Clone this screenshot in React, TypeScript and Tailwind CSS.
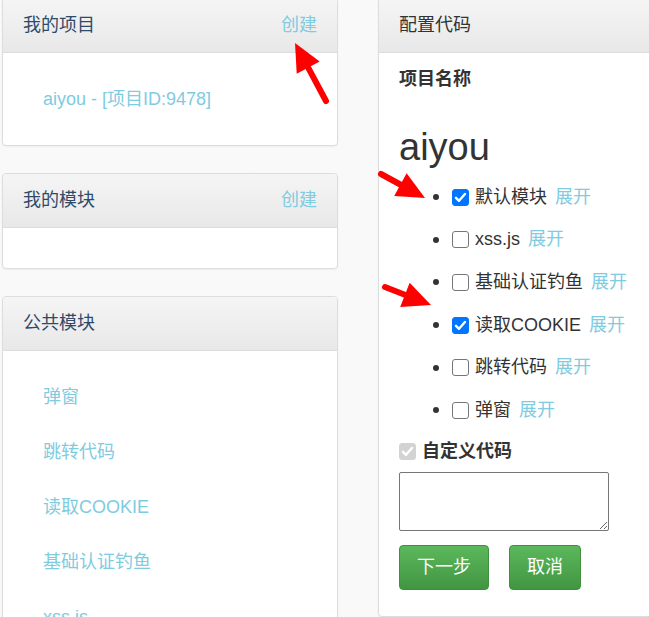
const font = "font-['Liberation_Sans','Noto_Sans_CJK_SC',sans-serif]";

const publicModules = ["弹窗", "跳转代码", "读取COOKIE", "基础认证钓鱼", "xss.js"];

const configModules = [
  { name: "默认模块", checked: true },
  { name: "xss.js", checked: false },
  { name: "基础认证钓鱼", checked: false },
  { name: "读取COOKIE", checked: true },
  { name: "跳转代码", checked: false },
  { name: "弹窗", checked: false },
];

function PanelHeading({ title, action, tone = "text-[#2f4a68]" }: { title: string; action?: string; tone?: string }) {
  return (
    <div className="flex h-[54px] items-center justify-between rounded-t-[4px] border-b border-[#dddddd] bg-gradient-to-b from-[#f5f5f5] to-[#e8e8e8] px-[20px]">
      <span className={`text-[18px] ${tone}`}>{title}</span>
      {action && <a className="text-[18px] text-[#7fcbe0]">{action}</a>}
    </div>
  );
}

function Check({ checked, disabled }: { checked: boolean; disabled?: boolean }) {
  return (
    <span className="relative inline-flex h-[17px] w-[17px] shrink-0">
      <input
        type="checkbox"
        defaultChecked={checked}
        disabled={disabled}
        className={`peer h-[17px] w-[17px] appearance-none rounded-[3px] border bg-white ${
          disabled
            ? "border-[#d3d3d3] checked:bg-[#d3d3d3]"
            : "border-[#767676] checked:border-[#0075ff] checked:bg-[#0075ff]"
        }`}
      />
      <svg
        viewBox="0 0 17 17"
        className="pointer-events-none absolute inset-0 hidden h-[17px] w-[17px] peer-checked:block"
        fill="none"
        stroke="white"
        strokeWidth={2.4}
        strokeLinecap="round"
        strokeLinejoin="round"
      >
        <path d="M4 8.8l3 3L13 5" />
      </svg>
    </span>
  );
}

function Arrow({ x1, y1, x2, y2 }: { x1: number; y1: number; x2: number; y2: number }) {
  // shaft from tail (x1,y1) to tip (x2,y2) with a filled head
  const dx = x2 - x1;
  const dy = y2 - y1;
  const len = Math.hypot(dx, dy);
  const ux = dx / len;
  const uy = dy / len;
  const hl = 28;
  const hw = 13;
  const bx = x2 - ux * hl;
  const by = y2 - uy * hl;
  const pts = `${x2},${y2} ${bx - uy * hw},${by + ux * hw} ${bx + uy * hw},${by - ux * hw}`;
  return (
    <g>
      <line x1={x1} y1={y1} x2={bx + ux * 4} y2={by + uy * 4} stroke="#ff0000" strokeWidth={6} strokeLinecap="round" />
      <polygon points={pts} fill="#ff0000" />
    </g>
  );
}

export default function App() {
  return (
    <div className={`relative h-[617px] w-[649px] overflow-hidden bg-[#f9f9f9] ${font} text-[#333]`}>
      <div className="-mt-[2px] flex items-start">
        {/* left column */}
        <div className="ml-[2px] flex w-[336px] shrink-0 flex-col gap-[27px]">
          <div className="rounded-[4px] border border-[#dddddd] bg-white shadow-[0_1px_2px_rgba(0,0,0,0.05)]">
            <PanelHeading title="我的项目" action="创建" />
            <div className="px-[40px] py-[20px]">
              <a className="flex h-[52px] items-center text-[18px] text-[#7fcbe0]">aiyou - [项目ID:9478]</a>
            </div>
          </div>

          <div className="rounded-[4px] border border-[#dddddd] bg-white shadow-[0_1px_2px_rgba(0,0,0,0.05)]">
            <PanelHeading title="我的模块" action="创建" />
            <div className="h-[40px]" />
          </div>

          <div className="rounded-[4px] border border-[#dddddd] bg-white shadow-[0_1px_2px_rgba(0,0,0,0.05)]">
            <PanelHeading title="公共模块" />
            <ul className="px-[40px] pt-[19px] pb-[20px]">
              {publicModules.map((m) => (
                <li key={m} className="flex h-[55px] items-center">
                  <a className="text-[18px] text-[#7fcbe0]">{m}</a>
                </li>
              ))}
            </ul>
          </div>
        </div>

        {/* right column */}
        <div className="ml-[40px] w-[300px] shrink-0 rounded-[4px] border border-[#dddddd] bg-white shadow-[0_1px_2px_rgba(0,0,0,0.05)]">
          <PanelHeading title="配置代码" tone="text-[#333]" />
          <div className="px-[20px] pt-[14px] pb-[26px]">
            <div className="h-[24px] text-[18px] font-bold leading-[24px]">项目名称</div>
            <h1 className="mt-[35px] h-[42px] text-[38px] leading-[42px]">aiyou</h1>
            <ul className="mt-[8px]">
              {configModules.map((m) => (
                <li key={m.name} className="flex h-[42.6px] items-center">
                  <span className="ml-[34px] h-[6px] w-[6px] rounded-full bg-[#333]" />
                  <span className="ml-[13px] flex">
                    <Check checked={m.checked} />
                  </span>
                  <span className="ml-[6px] text-[18px]">{m.name}</span>
                  <a className="ml-[8px] text-[18px] text-[#7fcbe0]">展开</a>
                </li>
              ))}
            </ul>
            <label className="mt-[8px] flex h-[24px] items-center">
              <Check checked disabled />
              <span className="ml-[6px] text-[18px] font-bold">自定义代码</span>
            </label>
            <textarea className="mt-[8px] block h-[59px] w-[210px] rounded-[2px] border border-[#767676] bg-white" />
            <div className="mt-[14px] flex gap-[20px]">
              <button className="h-[45px] w-[90px] rounded-[4px] border border-[#3e8f3e] bg-gradient-to-b from-[#5cb85c] to-[#419641] text-[18px] text-white">
                下一步
              </button>
              <button className="h-[45px] w-[72px] rounded-[4px] border border-[#3e8f3e] bg-gradient-to-b from-[#5cb85c] to-[#419641] text-[18px] text-white">
                取消
              </button>
            </div>
          </div>
        </div>
      </div>

      <svg className="pointer-events-none absolute inset-0" width={649} height={617}>
        <Arrow x1={326} y1={101} x2={295} y2={43} />
        <Arrow x1={381} y1={174} x2={425} y2={198} />
        <Arrow x1={385} y1={287} x2={431} y2={305} />
      </svg>
    </div>
  );
}
